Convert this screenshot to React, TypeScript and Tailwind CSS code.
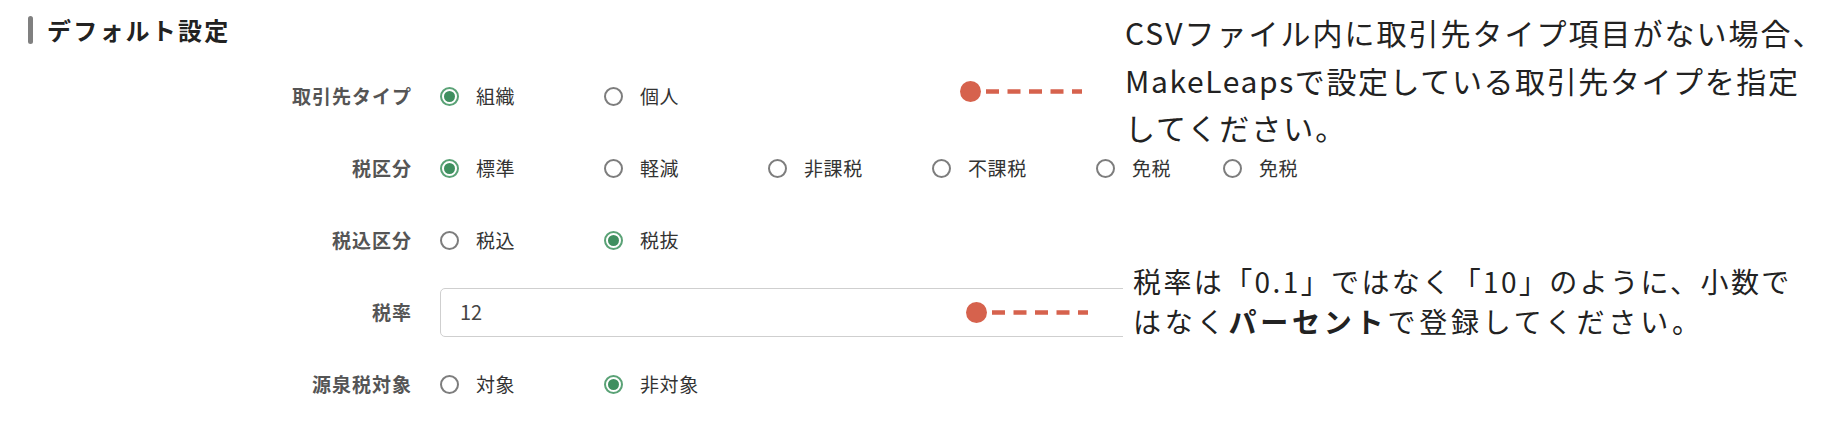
import React from "react";

type Option = { label: string; checked?: boolean; width?: string };

interface Row {
    label: string;
    options?: Option[];
    value?: string;
}

const rows: Row[] = [
    {
        label: "取引先タイプ",
        options: [{ label: "組織", checked: true }, { label: "個人" }],
    },
    {
        label: "税区分",
        options: [
            { label: "標準", checked: true },
            { label: "軽減" },
            { label: "非課税" },
            { label: "不課税" },
            { label: "免税", width: "w-[127px]" },
            { label: "免税" },
        ],
    },
    {
        label: "税込区分",
        options: [{ label: "税込" }, { label: "税抜", checked: true }],
    },
    { label: "税率", value: "12" },
    {
        label: "源泉税対象",
        options: [{ label: "対象" }, { label: "非対象", checked: true }],
    },
];

function Radio({ checked }: { checked?: boolean }) {
    if (checked) {
        return (
            <span className="flex h-[19px] w-[19px] shrink-0 items-center justify-center rounded-full border-2 border-[#5aa276]">
                <span className="h-[11px] w-[11px] rounded-full bg-[#3f8f5f]" />
            </span>
        );
    }
    return <span className="h-[19px] w-[19px] shrink-0 rounded-full border-2 border-[#7d7d7d]" />;
}

// red dot + dashed leader used by the callouts
function Leader({ className }: { className: string }) {
    return (
        <div className={`absolute flex items-center ${className}`}>
            <span className="h-[21px] w-[21px] rounded-full bg-[#d6624d]" />
            <svg width="96" height="5" className="ml-[5px]">
                <line x1="0" y1="2.5" x2="96" y2="2.5" stroke="#d6624d" strokeWidth="4.5" strokeDasharray="13 8.5" />
            </svg>
        </div>
    );
}

export default function App() {
    return (
        <div className="relative h-[430px] w-[1830px] overflow-hidden bg-white font-['Noto_Sans_CJK_JP','Noto_Sans',sans-serif]">
            <div className="flex items-center pl-[28px] pt-[16px]">
                <span className="h-[28px] w-[5px] rounded-full bg-[#808080]" />
                <h2 className="ml-[14px] text-[24px] font-bold leading-[28px] tracking-[2.2px] text-[#222]">デフォルト設定</h2>
            </div>

            <div className="mt-[16px] flex flex-col">
                {rows.map((row) => (
                    <div key={row.label} className="grid h-[72px] grid-cols-[412px_1fr] items-center gap-x-[28px]">
                        <div className="text-right text-[19px] font-bold tracking-[1px] text-[#555]">{row.label}</div>
                        {row.options ? (
                            <div className="flex items-center">
                                {row.options.map((opt, i) => (
                                    <div key={i} className={`flex items-center ${opt.width ?? "w-[164px]"}`}>
                                        <Radio checked={opt.checked} />
                                        <span className="ml-[17px] text-[19px] tracking-[0.6px] text-[#333]">{opt.label}</span>
                                    </div>
                                ))}
                            </div>
                        ) : (
                            <div className="flex h-[49px] w-[1200px] items-center rounded-[5px] border border-[#cfcfcf] pl-[19px] text-[20px] text-[#444]">
                                {row.value}
                            </div>
                        )}
                    </div>
                ))}
            </div>

            <Leader className="left-[960px] top-[81px]" />
            <div className="absolute left-[1125px] top-[9px] text-[30px] leading-[47.5px] tracking-[2px] text-[#222]">
                <p>CSVファイル内に取引先タイプ項目がない場合、</p>
                <p className="tracking-[1.6px]">MakeLeapsで設定している取引先タイプを指定</p>
                <p>してください。</p>
            </div>

            <Leader className="left-[966px] top-[302px]" />
            <div className="absolute left-[1123px] right-0 top-[261px] bg-white pl-[10px] text-[28px] leading-[40px] tracking-[2.4px] text-[#222]">
                <p>税率は「0.1」ではなく「10」のように、小数で</p>
                <p className="tracking-[3.8px]">
                    はなく<b className="font-bold">パーセント</b>で登録してください。
                </p>
            </div>
        </div>
    );
}
